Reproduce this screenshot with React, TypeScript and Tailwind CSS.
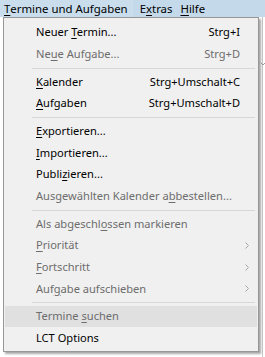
import { FC, ReactNode } from "react";

type Item =
  | { sep: true }
  | {
      label: ReactNode;
      shortcut?: string;
      disabled?: boolean;
      submenu?: boolean;
      hover?: boolean;
    };

const K: FC<{ children: ReactNode }> = ({ children }) => (
  <span className="underline underline-offset-2 decoration-1">{children}</span>
);

const items: Item[] = [
  { label: <>Neuer <K>T</K>ermin...</>, shortcut: "Strg+I" },
  { label: <>Ne<K>u</K>e Aufgabe...</>, shortcut: "Strg+D", disabled: true },
  { sep: true },
  { label: <><K>K</K>alender</>, shortcut: "Strg+Umschalt+C" },
  { label: <><K>A</K>ufgaben</>, shortcut: "Strg+Umschalt+D" },
  { sep: true },
  { label: <><K>E</K>xportieren...</> },
  { label: <><K>I</K>mportieren...</> },
  { label: <>Publi<K>z</K>ieren...</> },
  { label: <>Ausgewählten Kalender a<K>b</K>bestellen...</>, disabled: true },
  { sep: true },
  { label: <>Als abgeschl<K>o</K>ssen markieren</>, disabled: true },
  { label: <><K>P</K>riorität</>, disabled: true, submenu: true },
  { label: <><K>F</K>ortschritt</>, disabled: true, submenu: true },
  { label: <>Auf<K>g</K>abe aufschieben</>, disabled: true, submenu: true },
  { sep: true },
  { label: <>Termine <K>s</K>uchen</>, disabled: true, hover: true },
  { label: <>LCT Options</> },
];

const MenuRow: FC<{ item: Item }> = ({ item }) => {
  if ("sep" in item) {
    return <div className="ml-[27px] mr-[2px] my-[2.6px] h-px bg-[#d7d7d7]" />;
  }
  return (
    <div
      className={`flex h-[21.6px] items-center pl-[31px] pr-[17px] ${
        item.hover ? "bg-[#e0e0e0]" : ""
      } ${item.disabled ? "text-[#6d6d6d]" : "text-black"}`}
    >
      <span className="flex-1 whitespace-nowrap">{item.label}</span>
      {item.shortcut && <span className="whitespace-nowrap">{item.shortcut}</span>}
      {item.submenu && (
        <svg width="4" height="7" viewBox="0 0 4 7" className="-mr-[9px]">
          <path d="M0.5 0.5 L3.5 3.5 L0.5 6.5" fill="none" stroke="#a5a5a5" strokeWidth="1" />
        </svg>
      )}
    </div>
  );
};

export default function App() {
  return (
    <div
      className="relative h-[357px] w-[265px] overflow-hidden bg-white text-[11.1px]"
      style={{ fontFamily: '"Segoe UI", "Noto Sans", "Open Sans", sans-serif' }}
    >
      <div className="flex h-[17px] items-center bg-[#c4d9ea] text-[11.4px] text-black">
        <div className="flex h-full items-center bg-[#c9dded] pl-[4px] pr-[5px]">
          <K>T</K>ermine und Aufgaben
        </div>
        <div className="ml-[4px] px-[3px]">
          E<K>x</K>tras
        </div>
        <div className="ml-[2px] px-[3px]">
          <K>H</K>ilfe
        </div>
      </div>
      <div className="absolute left-[262px] top-[17px] h-[340px] w-px bg-[#c8c8c8]" />
      <svg width="6" height="4" viewBox="0 0 6 4" className="absolute left-[260px] top-[62px] z-10">
        <path d="M0.5 0.5 L3 3 L5.5 0.5" fill="none" stroke="#9a9a9a" strokeWidth="1" />
      </svg>
      <div className="absolute left-[3px] top-[17px] w-[256px] border border-[#979797] bg-[#f0f0f0] pt-[4px] pb-[2px] pl-[1px] pr-[1px] shadow-[2px_2px_2px_rgba(0,0,0,0.35)]">
        {items.map((it, i) => (
          <MenuRow key={i} item={it} />
        ))}
      </div>
    </div>
  );
}
